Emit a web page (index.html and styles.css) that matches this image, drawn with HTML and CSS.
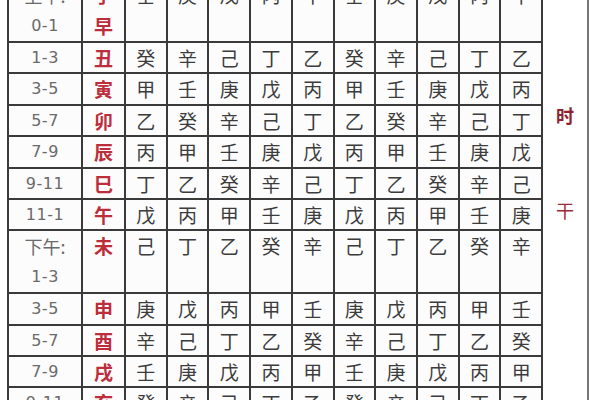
FILE: index.html
```html
<!DOCTYPE html>
<html lang="zh">
<head>
<meta charset="utf-8">
<link rel="stylesheet" href="styles.css">
</head>
<body>
<div class="chart">
  <div class="time span2"><span>上午:</span><span>0-1</span></div>
  <div class="branch span2"><span>子</span><span>早</span></div>
  <div class="val span2">壬</div><div class="val span2">庚</div><div class="val span2">戊</div><div class="val span2">丙</div><div class="val span2">甲</div><div class="val span2">壬</div><div class="val span2">庚</div><div class="val span2">戊</div><div class="val span2">丙</div><div class="val span2">甲</div>
  <div class="side"><span class="side-shi">时</span><span class="side-gan">干</span></div>

  <div class="time">1-3</div><div class="branch">丑</div>
  <div class="val">癸</div><div class="val">辛</div><div class="val">己</div><div class="val">丁</div><div class="val">乙</div><div class="val">癸</div><div class="val">辛</div><div class="val">己</div><div class="val">丁</div><div class="val">乙</div>

  <div class="time">3-5</div><div class="branch">寅</div>
  <div class="val">甲</div><div class="val">壬</div><div class="val">庚</div><div class="val">戊</div><div class="val">丙</div><div class="val">甲</div><div class="val">壬</div><div class="val">庚</div><div class="val">戊</div><div class="val">丙</div>

  <div class="time">5-7</div><div class="branch">卯</div>
  <div class="val">乙</div><div class="val">癸</div><div class="val">辛</div><div class="val">己</div><div class="val">丁</div><div class="val">乙</div><div class="val">癸</div><div class="val">辛</div><div class="val">己</div><div class="val">丁</div>

  <div class="time">7-9</div><div class="branch">辰</div>
  <div class="val">丙</div><div class="val">甲</div><div class="val">壬</div><div class="val">庚</div><div class="val">戊</div><div class="val">丙</div><div class="val">甲</div><div class="val">壬</div><div class="val">庚</div><div class="val">戊</div>

  <div class="time">9-11</div><div class="branch">巳</div>
  <div class="val">丁</div><div class="val">乙</div><div class="val">癸</div><div class="val">辛</div><div class="val">己</div><div class="val">丁</div><div class="val">乙</div><div class="val">癸</div><div class="val">辛</div><div class="val">己</div>

  <div class="time">11-1</div><div class="branch">午</div>
  <div class="val">戊</div><div class="val">丙</div><div class="val">甲</div><div class="val">壬</div><div class="val">庚</div><div class="val">戊</div><div class="val">丙</div><div class="val">甲</div><div class="val">壬</div><div class="val">庚</div>

  <div class="time span2"><span>下午:</span><span>1-3</span></div>
  <div class="branch span2"><span>未</span><span></span></div>
  <div class="val span2">己</div><div class="val span2">丁</div><div class="val span2">乙</div><div class="val span2">癸</div><div class="val span2">辛</div><div class="val span2">己</div><div class="val span2">丁</div><div class="val span2">乙</div><div class="val span2">癸</div><div class="val span2">辛</div>

  <div class="time">3-5</div><div class="branch">申</div>
  <div class="val">庚</div><div class="val">戊</div><div class="val">丙</div><div class="val">甲</div><div class="val">壬</div><div class="val">庚</div><div class="val">戊</div><div class="val">丙</div><div class="val">甲</div><div class="val">壬</div>

  <div class="time">5-7</div><div class="branch">酉</div>
  <div class="val">辛</div><div class="val">己</div><div class="val">丁</div><div class="val">乙</div><div class="val">癸</div><div class="val">辛</div><div class="val">己</div><div class="val">丁</div><div class="val">乙</div><div class="val">癸</div>

  <div class="time">7-9</div><div class="branch">戌</div>
  <div class="val">壬</div><div class="val">庚</div><div class="val">戊</div><div class="val">丙</div><div class="val">甲</div><div class="val">壬</div><div class="val">庚</div><div class="val">戊</div><div class="val">丙</div><div class="val">甲</div>

  <div class="time">9-11</div><div class="branch">亥</div>
  <div class="val">癸</div><div class="val">辛</div><div class="val">己</div><div class="val">丁</div><div class="val">乙</div><div class="val">癸</div><div class="val">辛</div><div class="val">己</div><div class="val">丁</div><div class="val">乙</div>
</div>
</body>
</html>
```

FILE: styles.css
```css
html, body {
  margin: 0;
  padding: 0;
  background: #ffffff;
  overflow: hidden;
}

body {
  width: 600px;
  height: 400px;
  font-family: "Noto Sans CJK SC", "Noto Sans", sans-serif;
}

.chart {
  display: grid;
  width: 582px;
  box-sizing: border-box;
  margin: -21.8px 0 0 7px;
  padding: 2px 0 2px 2px;
  gap: 2px;
  background: #3a3a3a;
  grid-template-columns: 72px 41px repeat(10, 1fr) 46px;
  grid-template-rows: repeat(14, 29.4px);
}

.chart > div {
  background: #fcfcfc;
  display: flex;
  align-items: center;
  justify-content: center;
  line-height: 29.4px;
}

.span2 {
  grid-row: span 2;
}

.span2.val {
  align-items: flex-start;
}

.span2.time,
.span2.branch {
  flex-direction: column;
  justify-content: space-around;
}

.span2 span {
  display: block;
  height: 30.4px;
  line-height: 30.4px;
}

.time {
  font-family: "DejaVu Sans", "Noto Sans CJK SC", sans-serif;
  font-size: 16px;
  color: #6a6a6a;
  letter-spacing: 0.5px;
}

.time span:first-child {
  font-family: "Noto Sans CJK SC", sans-serif;
  font-size: 18px;
  letter-spacing: 0;
}

.branch {
  font-size: 19px;
  font-weight: 700;
  color: #bd2e3c;
}

.val {
  font-size: 19px;
  color: #3c3c3c;
}

.side {
  grid-row: span 14;
  grid-column: 13;
  flex-direction: column;
  justify-content: flex-start !important;
  font-size: 18px;
  font-weight: 700;
  background: #ffffff !important;
  box-sizing: border-box;
  border-right: 2px solid #777;
}

.side-shi {
  margin-top: 123px;
  color: #8e2230;
  line-height: 24px;
}

.side-gan {
  margin-top: 71px;
  color: #9a2c3a;
  font-weight: 400;
  line-height: 24px;
}
```
